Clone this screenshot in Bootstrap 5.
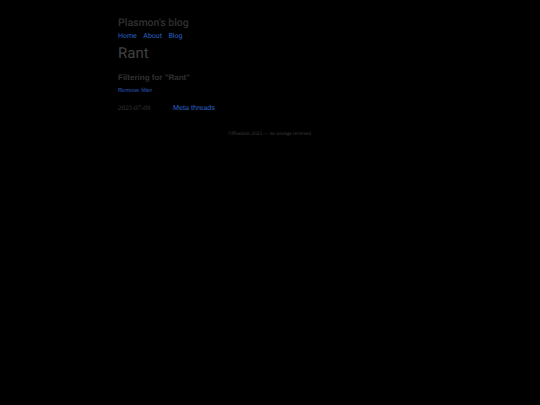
<!DOCTYPE html>
<html lang="en">
<head>
<meta charset="utf-8">
<title>Plasmon's blog</title>
<link href="https://cdn.jsdelivr.net/npm/bootstrap@5.3.0/dist/css/bootstrap.min.css" rel="stylesheet">
<style>
html,body{background:#000;}
body{color:#3a3a3a;font-family:Roboto,sans-serif;min-height:405px;text-rendering:geometricPrecision;}
.page-wrap{width:304px;margin-left:118px;padding-top:17px;}
.site-title{font-size:10.5px;line-height:12px;font-weight:500;color:#303030;margin:0 0 3px;}
.site-nav{gap:6.5px;font-size:7px;line-height:9px;}
a.site-link{color:#2a60c8;text-decoration:none;}
.page-title{font-size:15px;line-height:18px;font-weight:400;color:#404040;margin:3px 0 11px;}
.filter-title{font-family:"Liberation Sans",sans-serif;font-size:8px;line-height:10px;font-weight:700;color:#303030;margin:0 0 5px;}
.filter-remove{font-family:"Liberation Sans",sans-serif;font-size:5.8px;line-height:7px;display:block;margin-bottom:8px;}
.post-row{gap:23px;align-items:baseline;}
.post-date{font-family:"Liberation Serif",serif;font-style:italic;font-size:6.9px;color:#3a3a3a;width:32px;white-space:nowrap;}
.post-link{font-family:"Liberation Sans",sans-serif;font-size:7.2px;}
.site-foot{font-family:"Liberation Serif",serif;font-size:5.25px;line-height:6px;color:#3c3c3c;text-align:center;margin-top:17px;}
</style>
</head>
<body>
<div class="page-wrap">
<header>
<h1 class="site-title">Plasmon's blog</h1>
<nav class="d-flex site-nav"><a class="site-link" href="#">Home</a><a class="site-link" href="#">About</a><a class="site-link" href="#">Blog</a></nav>
</header>
<main>
<h2 class="page-title">Rant</h2>
<h3 class="filter-title">Filtering for "Rant"</h3>
<a class="site-link filter-remove" href="#">Remove filter</a>
<div class="d-flex post-row"><span class="post-date">2023-07-09</span><a class="site-link post-link" href="#">Meta threads</a></div>
</main>
<footer class="site-foot">©Plasmon 2023 — no wrongs reversed.</footer>
</div>
<script src="https://cdn.jsdelivr.net/npm/bootstrap@5.3.0/dist/js/bootstrap.bundle.min.js"></script>
</body>
</html>
